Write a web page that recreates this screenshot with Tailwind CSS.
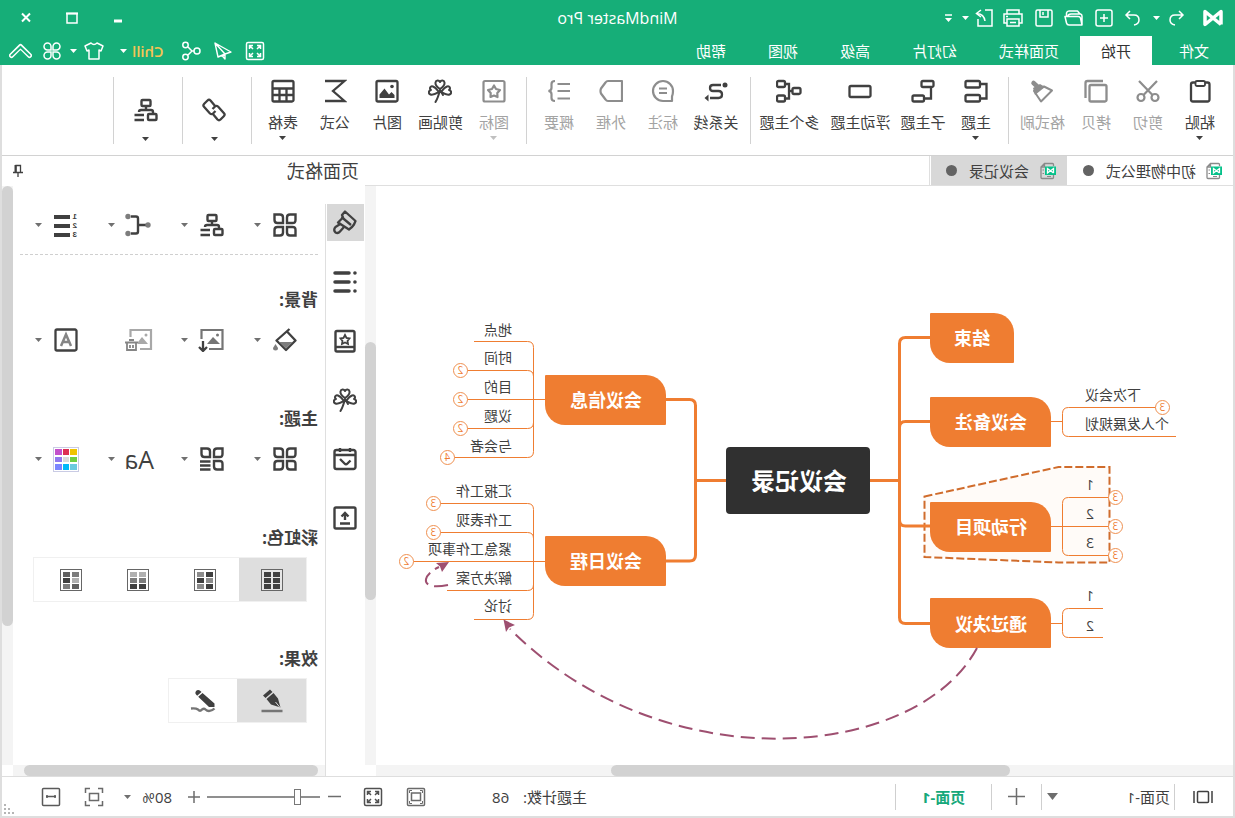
<!DOCTYPE html>
<html lang="zh-CN">
<head>
<meta charset="utf-8">
<title>MindMaster Pro</title>
<script src="https://cdn.jsdelivr.net/npm/@tailwindcss/browser@4"></script>
</head>
<body class="bg-white">
<!-- Shared icon shapes -->
<svg class="hidden" aria-hidden="true">
  <symbol id="caret" viewBox="0 0 7 4"><path d="M0 0H7L3.500 4Z" fill="currentColor"/></symbol>
  <symbol id="clover" viewBox="0 0 24 24"><g fill="none" stroke="currentColor" stroke-width="2" stroke-linejoin="round" stroke-linecap="round"><path d="M12 10C9 8 7 6 7.500 3.500C8 1 11 1 12 3C13 1 16 1 16.500 3.500C17 6 15 8 12 10Z"/><path d="M11.500 11C8 13 5.500 14.500 3 13.500C0.500 12.500 1 9.500 3.500 9C1.500 7.500 3 4.500 5.500 5.500C8 6.500 9.500 8.500 11.500 11Z" transform="translate(-.5 2)"/><path d="M12.500 11C16 13 18.500 14.500 21 13.500C23.500 12.500 23 9.500 20.500 9C22.500 7.500 21 4.500 18.500 5.500C16 6.500 14.500 8.500 12.500 11Z" transform="translate(.5 2)"/><path d="M12 11L9 16M12 11C13 15 14 19 16.500 23"/></g></symbol>
  <symbol id="org" viewBox="0 0 24 24"><g fill="none" stroke="currentColor" stroke-width="2.400"><rect x="7.500" y="2" width="9" height="6" rx="1"/><path d="M12 8V11M5 15V14Q5 12 7 12H17Q19 12 19 14"/><rect x="1.500" y="16" width="8.500" height="6" rx="1"/><path d="M14 17H23.500M14 22H23.500"/></g></symbol>
  <symbol id="four" viewBox="0 0 24 24"><g fill="none" stroke="currentColor" stroke-width="2.400"><path d="M1.500 1.500H7Q10 1.500 10 4.500V10H4.500Q1.500 10 1.500 7Z"/><path d="M22.500 1.500H17Q14 1.500 14 4.500V10H19.500Q22.500 10 22.500 7Z"/><path d="M1.500 22.500H7Q10 22.500 10 19.500V14H4.500Q1.500 14 1.500 17Z"/><path d="M22.500 22.500H17Q14 22.500 14 19.500V14H19.500Q22.500 14 22.500 17Z"/></g></symbol>
  <symbol id="expand" viewBox="0 0 20 20"><rect x="1.500" y="1.500" width="17" height="17" rx="1.500" fill="none" stroke="currentColor" stroke-width="1.500"/><path d="M4.500 8V4.500H8M12 4.500H15.500V8M15.500 12V15.500H12M8 15.500H4.500V12M4.500 4.500L8 8M15.500 4.500L12 8M15.500 15.500L12 12M4.500 15.500L8 12" fill="none" stroke="currentColor" stroke-width="1.500"/></symbol>
  <symbol id="doc" viewBox="0 0 18 18"><path d="M3.500 4V2.500Q3.500 1.500 4.500 1.500H12.500L16 5V15.500Q16 16.500 15 16.500H4.500Q3.500 16.500 3.500 15.500V13M12.500 1.500V5H16" fill="none" stroke="#8a8a8a" stroke-width="1.300"/><path d="M6 14.500H10M13 8H14.500M13 11.500H14.500" stroke="#8a8a8a"/><rect x="1" y="4.500" width="11" height="8.500" fill="#06c18a"/><path d="M3.500 11V6.500L9.500 11V6.500L3.500 11" fill="none" stroke="#fff" stroke-width="1.300"/></symbol>
</svg>

<!-- The whole window is shown mirrored, left to right -->
<div class="flex h-screen w-full -scale-x-100 flex-col overflow-hidden bg-white text-[#404040]" style="font-family:'Open Sans','Noto Sans CJK SC',sans-serif">
  <header class="shrink-0 bg-[#16ae78] text-white">
    <div class="relative flex h-9 items-center justify-between">
      <div class="flex items-center pl-[11px]">
        <svg width="22" height="20" viewBox="0 0 22 20" class="mr-4" aria-label="MindMaster"><path d="M3 16.500V3.500L19 16.500V3.500L3 16.500" fill="none" stroke="#fff" stroke-width="3.500" stroke-linejoin="round"/></svg>
        <button class="w-[22px]" aria-label="撤销"><svg width="20" height="20" viewBox="0 0 20 20" fill="none" stroke="currentColor" stroke-width="1.500"><path d="M7 3L3 7L7 11M3 7H11Q16 7 16 12Q16 16 11 17"/></svg></button>
        <button class="w-[21px] pl-[4px]" aria-label="撤销列表"><svg width="7" height="4"><use href="#caret"/></svg></button>
        <button class="w-6" aria-label="重做"><svg width="20" height="20" viewBox="0 0 20 20" fill="none" stroke="currentColor" stroke-width="1.500"><path d="M13 3L17 7L13 11M17 7H9Q4 7 4 12Q4 16 9 17"/></svg></button>
        <button class="ml-[5px] w-[30px]" aria-label="新建"><svg width="20" height="20" viewBox="0 0 20 20" fill="none" stroke="currentColor" stroke-width="1.500"><rect x="2" y="2" width="16" height="16" rx="2"/><path d="M6 10H14M10 6V14"/></svg></button>
        <button class="w-[30px]" aria-label="打开"><svg width="20" height="20" viewBox="0 0 20 20" fill="none" stroke="currentColor" stroke-width="1.500" stroke-linejoin="round"><path d="M2 17V8Q2 6.500 3.500 6H13Q16 6 16 8.500M4 6L6.500 3H15Q17 3 17.500 5V8.500M2 17H15Q17 17 17.500 15L19 8.500H6Q4 8.500 3.500 10Z"/></svg></button>
        <button class="w-[30px]" aria-label="保存"><svg width="20" height="20" viewBox="0 0 20 20" fill="none" stroke="currentColor" stroke-width="1.500"><rect x="2" y="2" width="16" height="16" rx="1.500"/><path d="M6 2V9H14V2M11 4V7"/></svg></button>
        <button class="w-[30px]" aria-label="打印"><svg width="22" height="20" viewBox="0 0 22 20" fill="none" stroke="currentColor" stroke-width="1.500"><path d="M5 6V2H17V6M5 15H2V6H20V15H17"/><rect x="5" y="11" width="12" height="7"/><path d="M16 8.500H18M8 14.500H14"/></svg></button>
        <button class="w-[22px]" aria-label="导出"><svg width="20" height="20" viewBox="0 0 20 20" fill="none" stroke="currentColor" stroke-width="1.500"><path d="M9 2H2V18H16V11M13 2L17.500 5.500L13 9M17 5.500Q10 6 9 13"/></svg></button>
        <button class="w-3 pl-[3px]" aria-label="导出列表"><svg width="7" height="4"><use href="#caret"/></svg></button>
        <button class="ml-2 w-3" aria-label="自定义"><svg width="7" height="9" viewBox="0 0 7 9"><path d="M0 1H7" stroke="#fff" stroke-width="1.500"/><path d="M0 4H7L3.500 8Z" fill="#fff"/></svg></button>
      </div>
      <h1 class="absolute left-1/2 -translate-x-1/2 text-[16px] leading-6">MindMaster Pro</h1>
      <div class="flex items-center gap-[34px] pr-[20px]">
        <button aria-label="最小化"><svg width="12" height="12" viewBox="0 0 12 12"><path d="M2 9H10" stroke="#fff" stroke-width="3"/></svg></button>
        <button aria-label="最大化"><svg width="12" height="12" viewBox="0 0 12 12"><path d="M1 1.500H11V11H1Z" fill="none" stroke="#fff" stroke-width="1.500"/><path d="M0 1.500H12" stroke="#fff" stroke-width="2"/></svg></button>
        <button aria-label="关闭"><svg width="12" height="12" viewBox="0 0 12 12"><path d="M2 1.500L10 9.500M10 1.500L2 9.500" stroke="#fff" stroke-width="2"/></svg></button>
      </div>
    </div>
    <div class="flex h-[29px] items-center justify-between">
      <nav class="flex h-full items-center pl-[5px] text-[15px] leading-5">
        <button class="mr-1.5 px-[21px]">文件</button>
        <button class="h-full bg-white px-[21px] text-[#333]">开始</button>
        <button class="px-[21px]">页面样式</button>
        <button class="px-[21px]">幻灯片</button>
        <button class="px-[21px]">高级</button>
        <button class="px-[21px]">视图</button>
        <button class="px-[21px]">帮助</button>
      </nav>
      <div class="flex items-center pr-[9px]">
        <button class="w-8" aria-label="全屏"><svg width="20" height="20"><use href="#expand"/></svg></button>
        <button class="w-8" aria-label="发送"><svg width="20" height="20" viewBox="0 0 20 20" fill="none" stroke="currentColor" stroke-width="1.400" stroke-linejoin="round"><path d="M18 2L2 11L8 13L18 2L15 16L8 13V18L11 14.500"/></svg></button>
        <button class="w-[37px]" aria-label="分享"><svg width="20" height="20" viewBox="0 0 20 20" fill="none" stroke="currentColor" stroke-width="1.500"><circle cx="4" cy="10" r="3"/><circle cx="15.500" cy="4" r="2.700"/><circle cx="15.500" cy="16" r="2.700"/><path d="M7 10H9L13 6M9 10L13 14"/></svg></button>
        <button class="flex items-center gap-[5px] text-[15px] leading-5 font-semibold text-[#f5c454]">Chill<svg width="7" height="4" class="text-white"><use href="#caret"/></svg></button>
        <button class="ml-4 flex items-center gap-[7px]" aria-label="皮肤"><svg width="20" height="20" viewBox="0 0 20 20" fill="none" stroke="currentColor" stroke-width="1.500" stroke-linejoin="round"><path d="M7 2Q10 5 13 2L19 5L17 10L15 9V18H5V9L3 10L1 5Z"/></svg><svg width="7" height="4"><use href="#caret"/></svg></button>
        <button class="ml-2" aria-label="应用"><svg width="20" height="20" viewBox="0 0 20 20" fill="none" stroke="currentColor" stroke-width="1.500"><path d="M9 9V5.500A3.500 3.500 0 1 0 5.500 9ZM11 9V5.500A3.500 3.500 0 1 1 14.500 9ZM9 11V14.500A3.500 3.500 0 1 1 5.500 11ZM11 11V14.500A3.500 3.500 0 1 0 14.500 11Z"/></svg></button>
        <button class="ml-2.5" aria-label="收起功能区"><svg width="23" height="18" viewBox="0 0 23 18"><path d="M2.500 13.500L11.500 4.500L20.500 13.500" fill="none" stroke="#fff" stroke-width="5" stroke-linecap="round" stroke-linejoin="round"/><path d="M2.500 13.500L11.500 5L20.500 13.500" fill="none" stroke="#16ae78" stroke-width="2" stroke-linecap="round"/></svg></button>
      </div>
    </div>
  </header>

  <div class="flex min-h-0 flex-1 flex-col border-x-2 border-b-2 border-[#dedede]">
    <!-- Ribbon -->
    <div role="toolbar" class="flex h-[91px] shrink-0 border-b border-[#d2d2d2] pl-[7px] text-[15px] leading-5">
      <button class="flex w-[52px] flex-col items-center pt-3.5"><svg width="24" height="24" viewBox="0 0 24 24" fill="none" stroke="currentColor" stroke-width="2.300"><rect x="2.500" y="3.500" width="18.500" height="19" rx="2"/><rect x="7" y="2" width="9.500" height="5" rx="1.500" fill="#fff" stroke-width="1.800"/></svg><span class="mt-[9px]">粘贴</span><svg width="7" height="4" class="mt-1"><use href="#caret"/></svg></button>
      <button class="flex w-[52px] flex-col items-center pt-3.5 text-[#a3a3a3]"><svg width="24" height="24" viewBox="0 0 24 24" fill="none" stroke="#8d8d8d" stroke-width="2.200"><circle cx="5" cy="18.500" r="3.500"/><circle cx="19" cy="18.500" r="3.500"/><path d="M7.500 16L21 2M16.500 16L3 2"/></svg><span class="mt-[9px]">剪切</span></button>
      <button class="flex w-[52px] flex-col items-center pt-3.5 text-[#a3a3a3]"><svg width="24" height="24" viewBox="0 0 24 24" fill="none" stroke="#8d8d8d" stroke-width="2.300"><rect x="1.500" y="6" width="17" height="16.500" rx="1.500"/><path d="M5 2H20.500Q22.500 2 22.500 4V19"/></svg><span class="mt-[9px]">拷贝</span></button>
      <button class="flex w-[55px] flex-col items-center pt-3.5 text-[#a3a3a3]"><svg width="24" height="24" viewBox="0 0 24 24"><path d="M2 11.500L10 7.500L20 12L13 22.500Z" fill="none" stroke="#8d8d8d" stroke-width="2" stroke-linejoin="round"/><path d="M9 8L14 5L21 9L19 16Z" fill="#8d8d8d"/><path d="M15 9L20.500 4" stroke="#8d8d8d" stroke-width="4.500" stroke-linecap="round"/></svg><span class="mt-[9px]">格式刷</span></button>
      <div class="mx-1.5 mt-3 h-[67px] w-px bg-[#d2d2d2]"></div>
      <button class="flex w-[52px] flex-col items-center pt-3.5"><svg width="24" height="24" viewBox="0 0 24 24" fill="none" stroke="currentColor" stroke-width="2.300"><rect x="8" y="2" width="14.500" height="6.500" rx="1.500"/><rect x="8" y="16" width="14.500" height="6.500" rx="1.500"/><path d="M8 5H1.500V19.500H8"/></svg><span class="mt-[9px]">主题</span><svg width="7" height="4" class="mt-1"><use href="#caret"/></svg></button>
      <button class="flex w-[54px] flex-col items-center pt-3.5"><svg width="24" height="24" viewBox="0 0 24 24" fill="none" stroke="currentColor" stroke-width="2.300"><rect x="1.500" y="2" width="12" height="6" rx="1.500"/><rect x="11" y="16.500" width="11.500" height="6" rx="1.500"/><path d="M4 8V19.500H11"/></svg><span class="mt-[9px]">子主题</span></button>
      <button class="flex w-[71px] flex-col items-center pt-3.5"><svg width="24" height="24" viewBox="0 0 24 24" fill="none" stroke="currentColor" stroke-width="2.300"><rect x="1.500" y="7" width="21" height="11" rx="1.500"/></svg><span class="mt-[9px]">浮动主题</span></button>
      <button class="flex w-[71px] flex-col items-center pt-3.5"><svg width="26" height="24" viewBox="0 0 26 24" fill="none" stroke="currentColor" stroke-width="2.300"><rect x="1.500" y="9" width="8" height="6" rx="1.500"/><rect x="17" y="2" width="8" height="6" rx="1.500"/><rect x="17" y="16.500" width="8" height="6" rx="1.500"/><path d="M9 12H13M17 5H13V19.500H17"/></svg><span class="mt-[9px]">多个主题</span></button>
      <div class="mr-[7px] ml-[3px] mt-3 h-[67px] w-px bg-[#d2d2d2]"></div>
      <button class="flex w-[54px] flex-col items-center pt-3.5"><svg width="24" height="24" viewBox="0 0 24 24"><circle cx="3" cy="6" r="2.500" fill="currentColor"/><path d="M7 6H15Q18 6 18 9Q18 12 15 12H9.500Q6 12 6 15.500Q6 19 9.500 19H18" fill="none" stroke="currentColor" stroke-width="2.300"/><path d="M19.500 15.500L23.500 19L19.500 22.500Z" fill="currentColor"/></svg><span class="mt-[9px]">关系线</span></button>
      <button class="flex w-[52px] flex-col items-center pt-3.5 text-[#a3a3a3]"><svg width="24" height="24" viewBox="0 0 24 24" fill="none" stroke="#8d8d8d" stroke-width="2.200" stroke-linejoin="round"><path d="M3 22V17.500Q2 15 2 12A10 10 0 1 1 12 22Z"/><path d="M8 9.500H16M8 14H16"/></svg><span class="mt-[9px]">标注</span></button>
      <button class="flex w-[52px] flex-col items-center pt-3.5 text-[#a3a3a3]"><svg width="24" height="24" viewBox="0 0 24 24" fill="none" stroke="#8d8d8d" stroke-width="2.200" stroke-linejoin="round"><path d="M1 2H15Q16.500 2 17.500 3.500L22 9.500Q23 12 22 14.500L17.500 20.500Q16.500 22 15 22H1Z"/></svg><span class="mt-[9px]">外框</span></button>
      <button class="flex w-[52px] flex-col items-center pt-3.5 text-[#a3a3a3]"><svg width="24" height="24" viewBox="0 0 24 24" fill="none" stroke="#8d8d8d" stroke-width="2.200"><path d="M1 5H13.500M1 12H13.500M1 19.500H13.500M16 2Q19.500 2 19.500 5V9Q19.500 11.500 22.500 12Q19.500 12.500 19.500 15V19Q19.500 22 16 22"/></svg><span class="mt-[9px]">概要</span></button>
      <div class="mx-1.5 mt-3 h-[67px] w-px bg-[#d2d2d2]"></div>
      <button class="flex w-[52px] flex-col items-center pt-3.5 text-[#a3a3a3]"><svg width="24" height="24" viewBox="0 0 24 24" fill="none" stroke="#8d8d8d" stroke-width="2.200"><rect x="1.500" y="2" width="21" height="20.500" rx="1.500"/><path d="M12 6.500L14 10L18 11L15.300 14L15.500 18L12 16.500L8.500 18L8.700 14L6 11L10 10Z" stroke-linejoin="round"/></svg><span class="mt-[9px]">图标</span><svg width="7" height="4" class="mt-1 text-[#c0c0c0]"><use href="#caret"/></svg></button>
      <button class="flex w-[55px] flex-col items-center pt-3.5"><svg width="24" height="24"><use href="#clover"/></svg><span class="mt-[9px]">剪贴画</span></button>
      <button class="flex w-[52px] flex-col items-center pt-3.5"><svg width="24" height="24" viewBox="0 0 24 24"><rect x="1.500" y="2" width="21" height="20.500" rx="1.500" fill="none" stroke="currentColor" stroke-width="2.300"/><path d="M4.500 19V16L7.500 13L10 15.500L14.500 9.500L19.500 15.500V19Z" fill="currentColor"/><circle cx="7" cy="7.500" r="1.800" fill="currentColor"/></svg><span class="mt-[9px]">图片</span></button>
      <button class="flex w-[52px] flex-col items-center pt-3.5"><svg width="24" height="24" viewBox="0 0 24 24" fill="none" stroke="currentColor" stroke-width="2.300"><path d="M22 2H2.500L14 12L2.500 22H22"/></svg><span class="mt-[9px]">公式</span></button>
      <button class="flex w-[52px] flex-col items-center pt-3.5"><svg width="24" height="24" viewBox="0 0 24 24" fill="none" stroke="currentColor" stroke-width="2.300"><rect x="1.500" y="2" width="21" height="20.500" rx="1.500"/><path d="M1.500 9.500H22.500M1.500 16H22.500M8.500 9.500V22M15.500 9.500V22"/></svg><span class="mt-[9px]">表格</span><svg width="7" height="4" class="mt-1"><use href="#caret"/></svg></button>
      <div class="mx-[5px] mt-3 h-[67px] w-px bg-[#d2d2d2]"></div>
      <button class="flex w-[63px] flex-col items-center pt-[33px]" aria-label="链接"><svg width="24" height="24" viewBox="0 0 24 24" fill="none" stroke="currentColor" stroke-width="2.300" stroke-linejoin="round"><path d="M10.500 8.500L15.500 2.500Q17 1 18.500 2.500L21.800 5.800Q23.300 7.300 22 8.800L16 15.500Q14.500 16.800 13 15.500L10.500 13"/><path d="M13.500 15.500L8.500 21.500Q7 23 5.500 21.500L2.200 18.200Q.7 16.700 2 15.200L8 8.500Q9.500 7.200 11 8.500L13.500 11"/></svg><svg width="7" height="4" class="mt-[15px]"><use href="#caret"/></svg></button>
      <div class="mt-3 h-[67px] w-px bg-[#d2d2d2]"></div>
      <button class="flex w-[68px] flex-col items-center pt-[33px] pl-1" aria-label="布局"><svg width="24" height="24"><use href="#org"/></svg><svg width="7" height="4" class="mt-[15px]"><use href="#caret"/></svg></button>
      <div class="mt-3 h-[67px] w-px bg-[#d2d2d2]"></div>
    </div>

    <div class="flex min-h-0 flex-1">
      <!-- Documents and drawing area -->
      <main class="flex min-w-0 flex-1 flex-col">
        <div role="tablist" class="flex h-[30px] shrink-0 border-b border-[#dfdfdf] text-[15px] leading-5">
          <button role="tab" class="flex w-[166px] items-center pl-2.5"><svg width="18" height="18"><use href="#doc"/></svg><span class="ml-[9px]">初中物理公式</span><span class="ml-3 size-[11px] rounded-full bg-[#636363]"></span></button>
          <button role="tab" class="flex w-[136px] items-center bg-[#d8d8d8] pl-2.5"><svg width="18" height="18"><use href="#doc"/></svg><span class="ml-2.5">会议记录</span><span class="ml-3 size-[11px] rounded-full bg-[#636363]"></span></button>
          <div class="ml-px w-px bg-[#dfdfdf]"></div>
        </div>
        <div class="flex min-h-0 flex-1">
          <div class="flex min-w-0 flex-1 flex-col">
            <svg class="min-h-0 w-full flex-1" viewBox="2 186 857 579" preserveAspectRatio="xMidYMid meet" role="img" aria-label="会议记录思维导图">
              <!-- boundary round the action items -->
              <path d="M310.500 496.500L176.500 467H125.500V562.500H176.500L310.500 557Z" fill="#fffbf8" stroke="#d06c2c" stroke-width="2" stroke-dasharray="8 3"/>
              <g fill="none" stroke="#ef7d31" stroke-width="3">
                <path d="M336 480.500H366M305 337.500H329.500Q335.500 337.500 335.500 343.500V617.500Q335.500 623.500 329.500 623.500H305M305 421.500H329.500Q335.500 421.500 335.500 427.500M305 526H329.500Q335.500 526 335.500 520"/>
                <path d="M509 480.500H540M569 399.500H545.500Q539.500 399.500 539.500 405.500V555Q539.500 561 545.500 561H569"/>
              </g>
              <g fill="none" stroke="#ef7d31">
                <path d="M184 421.500H172.500M72 407.500H166.500Q172.500 407.500 172.500 413.500V430.500Q172.500 436.500 166.500 436.500H59"/>
                <path d="M184 526.500H119M119 497.500H166.500Q172.500 497.500 172.500 503.500V549.500Q172.500 555.500 166.500 555.500H119"/>
                <path d="M184 623.500H172.500M132 608.500H166.500Q172.500 608.500 172.500 614.500V631.500Q172.500 637.500 166.500 637.500H132"/>
                <path d="M690 399.500H775M761 341.500H707.500Q701.500 341.500 701.500 347.500V451.500Q701.500 457.500 707.500 457.500H787M775 370.500H707.500Q701.500 370.500 701.500 376.500M775 428.500H707.500Q701.500 428.500 701.500 422.500"/>
                <path d="M690 561.500H828M801 503.500H707.500Q701.500 503.500 701.500 509.500V613.500Q701.500 619.500 707.500 619.500H761M801 532.500H707.500Q701.500 532.500 701.500 538.500M788 590.500H707.500Q701.500 590.500 701.500 584.500"/>
              </g>
              <g fill="#ef7d31">
                <path d="M241 313H304Q305 313 305 314V343A20 20 0 0 1 285 363H222Q221 363 221 362V333A20 20 0 0 1 241 313Z"/>
                <path id="leaf" d="M204 397H304Q305 397 305 398V427A20 20 0 0 1 285 447H185Q184 447 184 446V417A20 20 0 0 1 204 397Z"/>
                <use href="#leaf" y="105"/><use href="#leaf" y="201"/>
                <use href="#leaf" x="385" y="-22"/><use href="#leaf" x="385" y="139"/>
              </g>
              <rect x="365" y="447" width="144" height="67" rx="4" fill="#303030"/>
              <text x="436" y="490" font-size="24" font-weight="700" fill="#fff" text-anchor="middle">会议记录</text>
              <g font-size="18" font-weight="700" fill="#fff" text-anchor="middle">
                <text x="263" y="345">结束</text>
                <text x="244" y="429">会议备注</text>
                <text x="244" y="534">行动项目</text>
                <text x="244" y="631">通过决议</text>
                <text x="629" y="407">会议信息</text>
                <text x="629" y="568">会议日程</text>
              </g>
              <g font-size="14" fill="#404040">
                <g text-anchor="end">
                  <text x="150" y="400">下次会议</text><text x="150" y="429">个人发展规划</text>
                  <text x="149" y="490">1</text><text x="149" y="519">2</text><text x="149" y="548">3</text>
                  <text x="149" y="601">1</text><text x="149" y="631">2</text>
                </g>
                <text x="723" y="335">地点</text><text x="723" y="363">时间</text><text x="723" y="392">目的</text><text x="723" y="421">议题</text><text x="723" y="451">与会者</text>
                <text x="723" y="496">汇报工作</text><text x="723" y="525">工作表现</text><text x="723" y="554">紧急工作事项</text><text x="723" y="583">解决方案</text><text x="723" y="611">讨论</text>
              </g>
              <!-- counts of folded children -->
              <g fill="#fff" stroke="#ef9050">
                <circle cx="72.500" cy="407.500" r="7"/><circle cx="119.500" cy="497.500" r="7"/><circle cx="119.500" cy="526.500" r="7"/><circle cx="119.500" cy="555.500" r="7"/>
                <circle cx="774.500" cy="370.500" r="7"/><circle cx="774.500" cy="399.500" r="7"/><circle cx="774.500" cy="428.500" r="7"/><circle cx="787.500" cy="457.500" r="7"/>
                <circle cx="801.500" cy="503.500" r="7"/><circle cx="801.500" cy="532.500" r="7"/><circle cx="828.500" cy="561.500" r="7"/>
              </g>
              <g font-size="10" fill="#ef7d31" text-anchor="middle">
                <text x="72.500" y="411">3</text><text x="119.500" y="501">3</text><text x="119.500" y="530">3</text><text x="119.500" y="559">3</text>
                <text x="774.500" y="374">2</text><text x="774.500" y="403">2</text><text x="774.500" y="432">2</text><text x="787.500" y="461">4</text>
                <text x="801.500" y="507">3</text><text x="801.500" y="536">3</text><text x="828.500" y="565">2</text>
              </g>
              <!-- relationship lines -->
              <g fill="none" stroke="#9e4f70" stroke-width="2">
                <path d="M258 648C318 760 570 784 725 629" stroke-dasharray="14 7"/>
                <path d="M787 585C818 591 812 574 796 567" stroke-dasharray="14 6"/>
              </g>
              <path d="M731.500 619.500L720 625L726 627.500L729 632Z" fill="#9e4f70"/>
              <path d="M786 562L799 563L795 566.500L793 572Z" fill="#9e4f70"/>
            </svg>
            <div class="h-[11px] shrink-0 bg-[#f4f4f4] pl-[26%]"><div class="h-full w-[63%] rounded-full bg-[#d2d2d2]"></div></div>
          </div>
          <div class="mb-[11px] w-[11px] shrink-0 bg-[#f4f4f4] pt-[156px]"><div class="h-[258px] rounded-full bg-[#d2d2d2]"></div></div>
        </div>
      </main>

      <!-- Page format panel -->
      <aside class="flex w-[363px] shrink-0 flex-col">
        <div class="flex h-[30px] shrink-0 items-center justify-between pr-2.5 pl-1.5">
          <h2 class="text-[18px] leading-6">页面格式</h2>
          <button aria-label="固定"><svg width="12" height="14" viewBox="0 0 12 14" fill="none" stroke="currentColor" stroke-width="1.300"><path d="M3.500 8V1.500H8V8M1 8.500H11M6 8.500V13"/><path d="M8.500 1V8" stroke-width="2"/></svg></button>
        </div>
        <div class="flex min-h-0 flex-1">
          <div class="mt-[18px] flex w-10 shrink-0 flex-col items-center gap-[22px] border-r border-[#dfdfdf]">
            <button class="flex size-[37px] items-center justify-center bg-[#d8d8d8]" aria-label="页面格式"><svg width="26" height="26" viewBox="0 0 26 26" fill="none" stroke="currentColor" stroke-width="2.300" stroke-linejoin="round"><path d="M2.500 11.500L13 2L16 5.500L15 8L18 11L20 13L9 20Q6 18 4 15Z" transform="translate(0 -.5)"/><path d="M7 15L16.500 7M17 13.500L22.500 17Q25 20 22.500 22.500Q20 24 18 21.500L14 17"/></svg></button>
            <button class="flex size-[37px] items-center justify-center" aria-label="大纲"><svg width="24" height="24" viewBox="0 0 24 24" fill="none" stroke="currentColor" stroke-width="3.500" stroke-linecap="round"><path d="M8 3H22M8 12H22M8 21H22M2 3H2.100M2 12H2.100M2 21H2.100"/></svg></button>
            <button class="flex size-[37px] items-center justify-center" aria-label="图标"><svg width="24" height="24" viewBox="0 0 24 24" fill="none" stroke="currentColor" stroke-width="2.400"><rect x="2.500" y="2" width="19" height="20.500" rx="1.500"/><path d="M3 18H21.500"/><path d="M12 6L13.500 9L16.500 9.500L14.500 12L15 15L12 13.500L9 15L9.500 12L7.500 9.500L10.500 9Z" stroke-width="1.800"/></svg></button>
            <button class="flex size-[37px] items-center justify-center" aria-label="剪贴画"><svg width="24" height="24"><use href="#clover"/></svg></button>
            <button class="flex size-[37px] items-center justify-center" aria-label="任务"><svg width="24" height="24" viewBox="0 0 24 24" fill="none" stroke="currentColor" stroke-width="2.400"><rect x="1.500" y="3" width="21" height="19" rx="2"/><path d="M1.500 8H22.500M7 1V5M17 1V5M6.500 13.500L9.500 16.500Q11 18 12.500 16.500L17 12"/></svg></button>
            <button class="flex size-[37px] items-center justify-center" aria-label="导出"><svg width="24" height="24" viewBox="0 0 24 24" fill="none" stroke="currentColor" stroke-width="2.400"><rect x="1.500" y="1.500" width="21" height="21" rx="1.500"/><path d="M12 14V7M8.500 10.500L12 7L15.500 10.500M7 17.500H17"/></svg></button>
          </div>
          <div class="flex min-w-0 flex-1 flex-col">
            <div class="flex min-h-0 flex-1 flex-col overflow-hidden">
              <div class="mt-[27px] flex h-6 pl-2">
                <div class="flex w-[73px] items-center pl-5"><button aria-label="布局样式"><svg width="24" height="24"><use href="#four"/></svg></button><button class="ml-3" aria-label="更多布局样式"><svg width="7" height="4" class="text-[#707070]"><use href="#caret"/></svg></button></div>
                <div class="flex w-[73px] items-center pl-5"><button aria-label="布局"><svg width="24" height="24"><use href="#org"/></svg></button><button class="ml-3" aria-label="更多布局"><svg width="7" height="4" class="text-[#707070]"><use href="#caret"/></svg></button></div>
                <div class="flex w-[73px] items-center pl-5"><button aria-label="连接线样式"><svg width="26" height="24" viewBox="0 0 26 24" fill="none" stroke="currentColor" stroke-width="2.400"><path d="M5 12H13M20 3.500H15Q13 3.500 13 5.500V18.500Q13 20.500 15 20.500H20"/><g fill="#7d7d7d" stroke="none"><circle cx="3" cy="12" r="2.700"/><circle cx="23" cy="3.500" r="2.700"/><circle cx="23" cy="20.500" r="2.700"/></g></svg></button><button class="ml-2.5" aria-label="更多连接线"><svg width="7" height="4" class="text-[#707070]"><use href="#caret"/></svg></button></div>
                <div class="flex w-[73px] items-center pl-5"><button aria-label="编号"><svg width="24" height="28" viewBox="0 0 24 28"><path d="M8 6H24M8 15H24M8 24H24" stroke="currentColor" stroke-width="4"/><g style="font-family:'Liberation Sans',sans-serif" font-size="8" font-weight="700" fill="currentColor"><text x="1" y="8">1</text><text x="1" y="17">2</text><text x="1" y="26">3</text></g></svg></button><button class="ml-3" aria-label="更多编号"><svg width="7" height="4" class="text-[#707070]"><use href="#caret"/></svg></button></div>
              </div>
              <div class="mx-[7px] mt-[17px] border-t border-dashed border-[#cfcfcf]"></div>
              <h3 class="mt-[33px] pl-[7px] text-[17px] leading-6 font-bold">背景:</h3>
              <div class="mt-4 flex pl-2">
                <div class="flex w-[73px] items-center pl-5"><button aria-label="填充"><svg width="24" height="24" viewBox="0 0 24 24"><path d="M7.500 1L20.500 12.500L11 22L1.500 12.500L10 3.500" fill="none" stroke="currentColor" stroke-width="2.300" stroke-linejoin="round"/><path d="M4.500 14H18L11 20.500Z" fill="#7d7d7d"/><path d="M21.500 16L24 20A2.300 2.300 0 0 1 19 20Z" fill="#7d7d7d"/></svg></button><button class="ml-3" aria-label="更多填充"><svg width="7" height="4" class="text-[#707070]"><use href="#caret"/></svg></button></div>
                <div class="flex w-[73px] items-center pl-5"><button aria-label="背景图片"><svg width="26" height="24" viewBox="0 0 26 24"><path d="M15 21H1.500V2H22.500V11" fill="none" stroke="#757575" stroke-width="2.200"/><path d="M4 16L11 9L17 16Z" fill="#757575"/><circle cx="6.500" cy="7" r="1.500" fill="#757575"/><path d="M21 13V23M17 19L21 23L25 19" fill="none" stroke="currentColor" stroke-width="2.300"/></svg></button><button class="ml-2.5" aria-label="更多背景图片"><svg width="7" height="4" class="text-[#707070]"><use href="#caret"/></svg></button></div>
                <div class="flex w-[73px] items-center pl-[18px]"><button aria-label="删除背景"><svg width="28" height="24" viewBox="0 0 28 24"><path d="M13 21H2V2H22.500V9" fill="none" stroke="#a8a8a8" stroke-width="2.200"/><path d="M5 16L11 9L15 14V16Z" fill="#a8a8a8"/><circle cx="7" cy="7" r="1.500" fill="#a8a8a8"/><path d="M15 14.500H28M19 12H24M17 15V22H26V15M20 17V20M23 17V20" fill="none" stroke="#858585" stroke-width="1.800"/></svg></button></div>
                <div class="flex w-[73px] items-center pl-5"><button aria-label="水印"><svg width="24" height="24" viewBox="0 0 24 24"><rect x="1.500" y="1.500" width="21" height="21" rx="1.500" fill="none" stroke="currentColor" stroke-width="2.300"/><path d="M7 18L12 6.500L17 18M9 14H15" fill="none" stroke="#858585" stroke-width="2.500"/></svg></button><button class="ml-3" aria-label="更多水印"><svg width="7" height="4" class="text-[#707070]"><use href="#caret"/></svg></button></div>
              </div>
              <h3 class="mt-[55px] pl-[7px] text-[17px] leading-6 font-bold">主题:</h3>
              <div class="mt-4 flex pl-2">
                <div class="flex w-[73px] items-center pl-5"><button aria-label="主题样式"><svg width="24" height="24"><use href="#four"/></svg></button><button class="ml-3" aria-label="更多主题样式"><svg width="7" height="4" class="text-[#707070]"><use href="#caret"/></svg></button></div>
                <div class="flex w-[73px] items-center pl-5"><button aria-label="主题颜色"><svg width="24" height="24" viewBox="0 0 24 24" fill="none" stroke="currentColor" stroke-width="2.400"><path d="M1.500 1.500H7Q10 1.500 10 4.500V10H4.500Q1.500 10 1.500 7ZM22.500 1.500H17Q14 1.500 14 4.500V10H19.500Q22.500 10 22.500 7ZM1.500 22.500H7Q10 22.500 10 19.500V14H4.500Q1.500 14 1.500 17ZM13.500 14.500H24M13.500 18.500H24M13.500 22.500H24"/></svg></button><button class="ml-3" aria-label="更多主题颜色"><svg width="7" height="4" class="text-[#707070]"><use href="#caret"/></svg></button></div>
                <div class="flex h-6 w-[73px] items-center pl-[17px]"><button class="w-7 text-[25px] leading-6 font-medium" aria-label="主题字体">Aa</button><button class="ml-[11px]" aria-label="更多字体"><svg width="7" height="4" class="text-[#707070]"><use href="#caret"/></svg></button></div>
                <div class="flex h-6 w-[73px] items-center pl-[19px]"><button aria-label="配色"><svg width="26" height="25" viewBox="0 0 26 25"><rect x=".5" y=".5" width="25" height="24" fill="#fff" stroke="#c9cbe4"/><path fill="#eec300" d="M2 2h7v6H2z"/><path fill="#dc2f52" d="M10 2h6v6h-6z"/><path fill="#c350cb" d="M17 2h7v6h-7z"/><path fill="#6fce42" d="M2 10h7v5H2z"/><path fill="#dadada" d="M10 10h6v5h-6z"/><path fill="#9179ee" d="M17 10h7v5h-7z"/><path fill="#6bcade" d="M2 17h7v6H2z"/><path fill="#00b9f8" d="M10 17h6v6h-6z"/><path fill="#7b86ff" d="M17 17h7v6h-7z"/></svg></button><button class="ml-[11px]" aria-label="更多配色"><svg width="7" height="4" class="text-[#707070]"><use href="#caret"/></svg></button></div>
              </div>
              <h3 class="mt-[55px] pl-[7px] text-[17px] leading-6 font-bold">彩虹色:</h3>
              <div class="mt-[7px] ml-[18px] flex h-[45px] w-[274px] border border-[#f0f0f0] pr-1">
                <button class="flex flex-1 items-center justify-center bg-[#dedede]" aria-label="彩虹色 1"><svg width="22" height="22" viewBox="0 0 22 22"><rect x=".5" y=".5" width="21" height="21" fill="#e6e6e6" stroke="#666"/><path fill="#404040" d="M3 3h7v5H3zM12 3h7v5h-7zM3 9h7v5H3zM12 9h7v5h-7zM3 15h7v5H3zM12 15h7v5h-7z"/></svg></button>
                <button class="flex flex-1 items-center justify-center" aria-label="彩虹色 2"><svg width="22" height="22" viewBox="0 0 22 22"><rect x=".5" y=".5" width="21" height="21" fill="#fff" stroke="#666"/><path fill="#404040" d="M3 3h7v5H3zM12 9h7v5h-7zM3 15h7v5H3z"/><path fill="#8c8c8c" d="M12 3h7v5h-7zM3 9h7v5H3zM12 15h7v5h-7z"/></svg></button>
                <button class="flex flex-1 items-center justify-center" aria-label="彩虹色 3"><svg width="22" height="22" viewBox="0 0 22 22"><rect x=".5" y=".5" width="21" height="21" fill="#fff" stroke="#666"/><path fill="#b0b0b0" d="M3 3h7v5H3zM12 3h7v5h-7z"/><path fill="#7c7c7c" d="M3 9h7v5H3zM12 9h7v5h-7z"/><path fill="#404040" d="M3 15h7v5H3zM12 15h7v5h-7z"/></svg></button>
                <button class="flex flex-1 items-center justify-center" aria-label="彩虹色 4"><svg width="22" height="22" viewBox="0 0 22 22"><rect x=".5" y=".5" width="21" height="21" fill="#fff" stroke="#666"/><path fill="#7c7c7c" d="M3 3h7v5H3zM12 15h7v5h-7z"/><path fill="#b0b0b0" d="M3 9h7v5H3z"/><path fill="#606060" d="M12 3h7v5h-7zM3 15h7v5H3z"/><path fill="#404040" d="M12 9h7v5h-7z"/></svg></button>
              </div>
              <h3 class="mt-[45px] pl-[7px] text-[17px] leading-6 font-bold">效果:</h3>
              <div class="mt-[7px] ml-[18px] flex h-[45px] w-[139px] border border-[#f0f0f0]">
                <button class="flex flex-1 items-center justify-center bg-[#dedede]" aria-label="普通"><svg width="24" height="24" viewBox="0 0 24 24"><path d="M14 1L21 7L18.500 9.500L11.500 3.500ZM10.500 4.500L17.500 10.500L13 16L3.500 19L6 10Z" fill="currentColor" transform="translate(0 -.5)"/><path d="M4 18.500L8.500 13" stroke="#dedede"/><path d="M1.500 22H22.500" stroke="#757575" stroke-width="2.500"/></svg></button>
                <button class="flex flex-1 items-center justify-center" aria-label="手绘"><svg width="26" height="24" viewBox="0 0 26 24"><path d="M14.500 3L15.500 2Q18 0 20 2Q21.500 4 20 5.500L18.800 6.800ZM13.500 4L17.800 7.800L7 18H1.500V14.500Z" fill="currentColor"/><path d="M1.500 19.500Q4 22 7 22Q9 22 10.500 20.500Q12 19 14 20.500Q16 23 18 20.500Q20 19 25 19.500" fill="none" stroke="#757575" stroke-width="2.300"/></svg></button>
              </div>
            </div>
            <div class="h-[11px] shrink-0 bg-[#f4f4f4] pr-[11px] pl-[7px]"><div class="h-full rounded-full bg-[#d2d2d2]"></div></div>
          </div>
          <div class="mb-[11px] w-[11px] shrink-0 bg-[#f4f4f4]"><div class="h-[76%] rounded-full bg-[#d2d2d2]"></div></div>
        </div>
      </aside>
    </div>

    <!-- Status bar -->
    <footer class="relative flex h-10 shrink-0 items-center justify-between border-t border-[#dedede] text-[15px] leading-5">
      <div class="flex items-center">
        <button class="ml-5 w-[38px]" aria-label="页面视图"><svg width="20" height="14" viewBox="0 0 20 14" fill="none" stroke="currentColor" stroke-width="1.500"><path d="M1 1V13M19 1V13"/><rect x="4.500" y="1.500" width="11" height="11" rx="1"/></svg></button>
        <div class="relative flex h-[26px] w-[134px] items-center border-x border-[#cfcfcf]">
          <select class="h-full w-full appearance-none bg-transparent pl-1" aria-label="当前页面"><option>页面-1</option></select>
          <svg width="11" height="7" viewBox="0 0 11 7" class="pointer-events-none absolute right-[5px]"><path d="M0 0H11L5.500 7Z" fill="#6d6d6d"/></svg>
        </div>
        <button class="flex h-[26px] w-[50px] items-center justify-center border-r border-[#cfcfcf]" aria-label="新增页面"><svg width="17" height="17" viewBox="0 0 17 17"><path d="M0 8.500H17M8.500 0V17" stroke="#6d6d6d" stroke-width="1.500"/></svg></button>
        <button class="h-[26px] w-[96px] border-r border-[#cfcfcf] font-bold text-[#16a87a]">页面-1</button>
      </div>
      <div class="flex items-center">
        <p>主题计数:</p><p class="ml-3.5">68</p>
        <button class="ml-[66px]" aria-label="适合页面"><svg width="20" height="20" viewBox="0 0 20 20" fill="none" stroke="#6a6a6a" stroke-width="1.500"><rect x="1.500" y="1.500" width="17" height="17" rx="1"/><rect x="5.500" y="6" width="9" height="7.500"/><path d="M3.500 6V3.500H6M14 3.500H16.500V6M16.500 14V16.500H14M6 16.500H3.500V14" stroke-width="1"/></svg></button>
        <button class="ml-[23px]" aria-label="全屏"><svg width="20" height="20" class="text-[#505050]"><use href="#expand"/></svg></button>
        <button class="ml-[22px]" aria-label="缩小"><svg width="13" height="13" viewBox="0 0 13 13"><path d="M0 6.500H13" stroke="#6d6d6d" stroke-width="1.500"/></svg></button>
        <input type="range" min="0" max="100" value="18" aria-label="缩放" class="ml-2 h-4 w-[113px] appearance-none bg-transparent [&::-webkit-slider-runnable-track]:h-[2px] [&::-webkit-slider-runnable-track]:bg-[#8f8f8f] [&::-webkit-slider-thumb]:-mt-[7px] [&::-webkit-slider-thumb]:h-4 [&::-webkit-slider-thumb]:w-[7px] [&::-webkit-slider-thumb]:appearance-none [&::-webkit-slider-thumb]:border [&::-webkit-slider-thumb]:border-[#777] [&::-webkit-slider-thumb]:bg-white">
        <button class="ml-[7px]" aria-label="放大"><svg width="12" height="12" viewBox="0 0 12 12"><path d="M0 6H12M6 0V12" stroke="#6d6d6d" stroke-width="1.500"/></svg></button>
        <button class="ml-4 flex w-12 items-center justify-between" aria-label="缩放比例">80%<svg width="7" height="4" class="text-[#707070]"><use href="#caret"/></svg></button>
        <button class="ml-5" aria-label="适合选区"><svg width="20" height="20" viewBox="0 0 20 20" fill="none" stroke="#6a6a6a" stroke-width="1.500"><path d="M1.500 6V1.500H6M14 1.500H18.500V6M18.500 14V18.500H14M6 18.500H1.500V14"/><rect x="5.500" y="6.500" width="9" height="7"/></svg></button>
        <button class="mr-[39px] ml-[23px]" aria-label="适合宽度"><svg width="20" height="20" viewBox="0 0 20 20" fill="none" stroke="#5a5a5a" stroke-width="1.500"><rect x="1.500" y="1.500" width="17" height="17" rx="1"/><path d="M5 9.500H15M6 8V11M14 8V11"/></svg></button>
      </div>
      <svg width="10" height="10" viewBox="0 0 10 10" class="absolute right-0.5 bottom-0.5" aria-hidden="true"><path fill="#b5b5b5" d="M8 0h2v2H8zM8 4h2v2H8zM4 4h2v2H4zM8 8h2v2H8zM4 8h2v2H4zM0 8h2v2H0z"/></svg>
    </footer>
  </div>
</div>
</body>
</html>
